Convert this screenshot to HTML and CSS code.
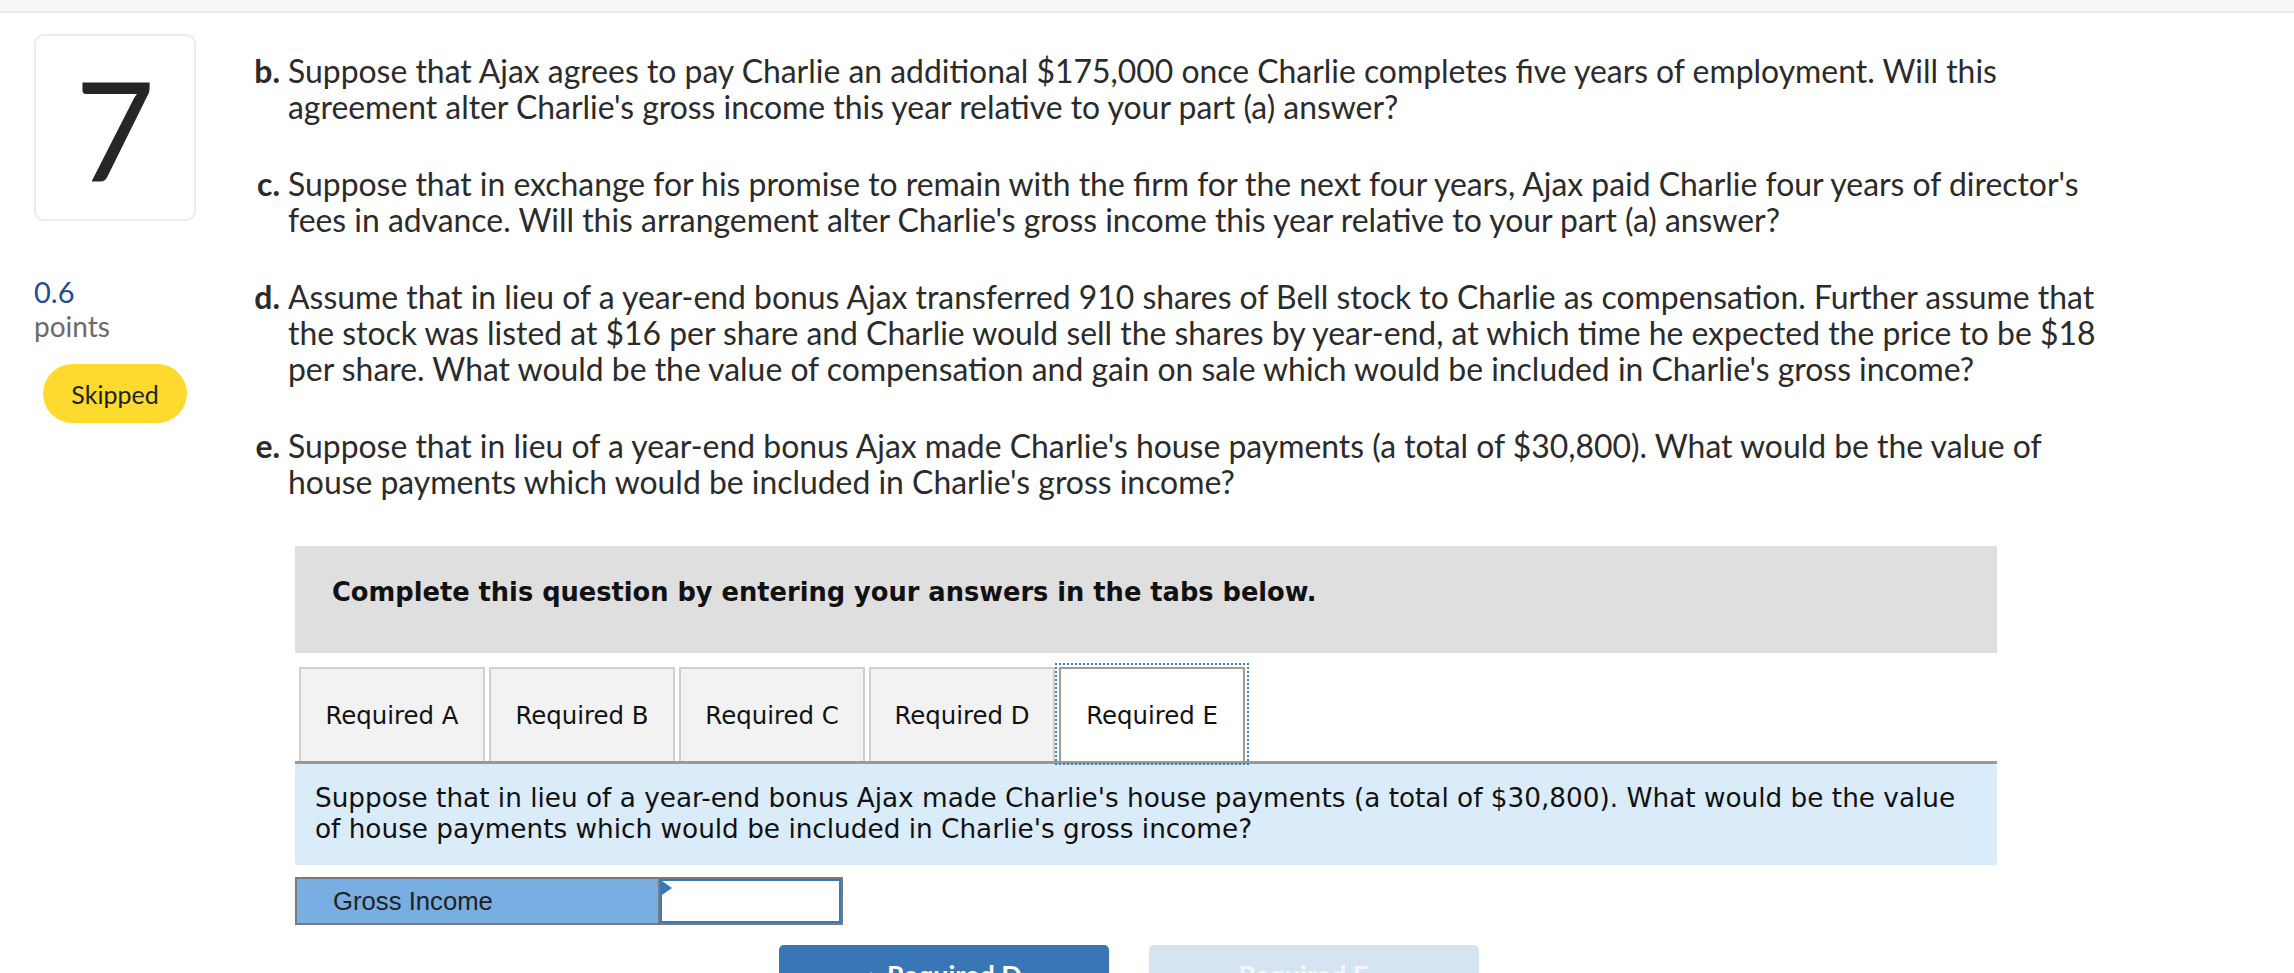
FILE: index.html
```html
<!DOCTYPE html>
<html lang="en">
<head>
<meta charset="utf-8">
<title>Question 7</title>
<link rel="stylesheet" href="styles.css">
</head>
<body>
<div class="topbar"></div>
<div class="page">
  <aside class="side">
    <div class="qnum">7</div>
    <div class="score">0.6</div>
    <div class="score-label">points</div>
    <div class="status">Skipped</div>
  </aside>
  <main class="content">
    <div class="part"><span class="label">b.</span><p class="ptext">Suppose that Ajax agrees to pay Charlie an additional $175,000 once Charlie completes five years of employment. Will this<br>agreement alter Charlie's gross income this year relative to your part (a) answer?</p></div>
    <div class="part"><span class="label">c.</span><p class="ptext">Suppose that in exchange for his promise to remain with the firm for the next four years, Ajax paid Charlie four years of director's<br>fees in advance. Will this arrangement alter Charlie's gross income this year relative to your part (a) answer?</p></div>
    <div class="part"><span class="label">d.</span><p class="ptext">Assume that in lieu of a year-end bonus Ajax transferred 910 shares of Bell stock to Charlie as compensation. Further assume that<br>the stock was listed at $16 per share and Charlie would sell the shares by year-end, at which time he expected the price to be $18<br>per share. What would be the value of compensation and gain on sale which would be included in Charlie's gross income?</p></div>
    <div class="part"><span class="label">e.</span><p class="ptext">Suppose that in lieu of a year-end bonus Ajax made Charlie's house payments (a total of $30,800). What would be the value of<br>house payments which would be included in Charlie's gross income?</p></div>

    <section class="work">
      <div class="instr">Complete this question by entering your answers in the tabs below.</div>
      <div class="tabs">
        <div class="tab">Required A</div>
        <div class="tab">Required B</div>
        <div class="tab">Required C</div>
        <div class="tab">Required D</div>
        <div class="tab active">Required E</div>
      </div>
      <div class="prompt">Suppose that in lieu of a year-end bonus Ajax made Charlie's house payments (a total of $30,800). What would be the value<br>of house payments which would be included in Charlie's gross income?</div>
      <div class="answer">
        <div class="alabel">Gross Income</div>
        <div class="ainput"></div>
      </div>
      <div class="nav">
        <button class="btn prev">&#8249;&nbsp;&nbsp;Required D</button>
        <button class="btn next">Required E&nbsp;&nbsp;&#8250;</button>
      </div>
    </section>
  </main>
</div>
</body>
</html>
```
FILE: styles.css
```css
html, body {
  margin: 0;
  padding: 0;
  background: #ffffff;
}

body {
  font-family: "Lato", "Open Sans", sans-serif;
  color: #2b2b2b;
}

.topbar {
  height: 11px;
  background: #f7f7f7;
  border-bottom: 2px solid #e9e9e9;
}

.page {
  display: flex;
  padding: 21px 0 0 34px;
}

.side {
  flex: none;
  width: 162px;
  display: flex;
  flex-direction: column;
}

.qnum {
  box-sizing: border-box;
  height: 187px;
  border: 2px solid #ececec;
  border-radius: 10px;
  display: flex;
  align-items: center;
  justify-content: center;
  font-size: 138px;
  line-height: 1;
  color: #262626;
}

.score {
  margin-top: 54px;
  font-size: 29px;
  line-height: 34px;
  color: #1d4f8d;
}

.score-label {
  font-size: 28px;
  line-height: 34px;
  color: #6a6a6a;
}

.status {
  margin: 21px 0 0 9px;
  width: 144px;
  height: 59px;
  border-radius: 30px;
  background: #fddb2e;
  display: flex;
  align-items: center;
  justify-content: center;
  font-size: 25px;
  color: #222;
}

.content {
  margin-left: 57px;
  padding-top: 19px;
}

.part {
  display: flex;
  margin-bottom: 41px;
  font-size: 31.9px;
  line-height: 36px;
}

.label {
  flex: none;
  width: 35px;
  box-sizing: border-box;
  padding-right: 8px;
  text-align: right;
  font-weight: 700;
}

.ptext {
  margin: 0;
  white-space: nowrap;
}

.work {
  margin: 46px 0 0 42px;
  width: 1702px;
}

.instr {
  box-sizing: border-box;
  height: 107px;
  padding: 0 0 16px 37px;
  display: flex;
  align-items: center;
  background: #dfdfdf;
  font-family: "DejaVu Sans", "Verdana", sans-serif;
  font-weight: 700;
  font-size: 25.7px;
  color: #111;
}

.tabs {
  margin-top: 14px;
  padding-left: 4px;
  display: flex;
  gap: 4px;
  border-bottom: 3px solid #999999;
}

.tab {
  box-sizing: border-box;
  width: 186px;
  height: 94px;
  border: 2px solid #cfcfcf;
  border-bottom: none;
  background: #f2f2f2;
  display: flex;
  align-items: center;
  justify-content: center;
  font-family: "DejaVu Sans", "Verdana", sans-serif;
  font-size: 24.4px;
  color: #111;
}

.tab.active {
  background: #ffffff;
  border-color: #9c9c9c;
  outline: 2px dotted #3b7cc6;
  outline-offset: 2px;
}

.prompt {
  box-sizing: border-box;
  height: 101px;
  padding: 19px 20px 0 20px;
  background: #daebf9;
  font-family: "DejaVu Sans", "Verdana", sans-serif;
  font-size: 26.3px;
  line-height: 31px;
  color: #111;
  white-space: nowrap;
}

.answer {
  margin-top: 12px;
  box-sizing: border-box;
  width: 548px;
  height: 48px;
  display: flex;
  border: 2px solid #7a7a7a;
}

.alabel {
  box-sizing: border-box;
  width: 363px;
  padding-left: 36px;
  border-right: 2px solid #7a7a7a;
  background: #79aee3;
  display: flex;
  align-items: center;
  font-family: "Liberation Sans", Arial, sans-serif;
  font-size: 25.7px;
  color: #222;
}

.ainput {
  position: relative;
  flex: 1;
  border: 2px solid #3b78b6;
  background: #fff;
}

.ainput::before {
  content: "";
  position: absolute;
  left: 0;
  top: 0;
  border-left: 10px solid #3b78b6;
  border-top: 7px solid transparent;
  border-bottom: 7px solid transparent;
}

.nav {
  margin-top: 20px;
  padding-left: 484px;
  display: flex;
  gap: 40px;
}

.btn {
  width: 330px;
  height: 58px;
  border: none;
  border-radius: 5px;
  font-family: "Lato", sans-serif;
  font-weight: 700;
  font-size: 27px;
}

.btn.prev {
  background: #3876b6;
  color: #ffffff;
}

.btn.next {
  background: #d6e4f1;
  color: #f3f7fb;
}
```
